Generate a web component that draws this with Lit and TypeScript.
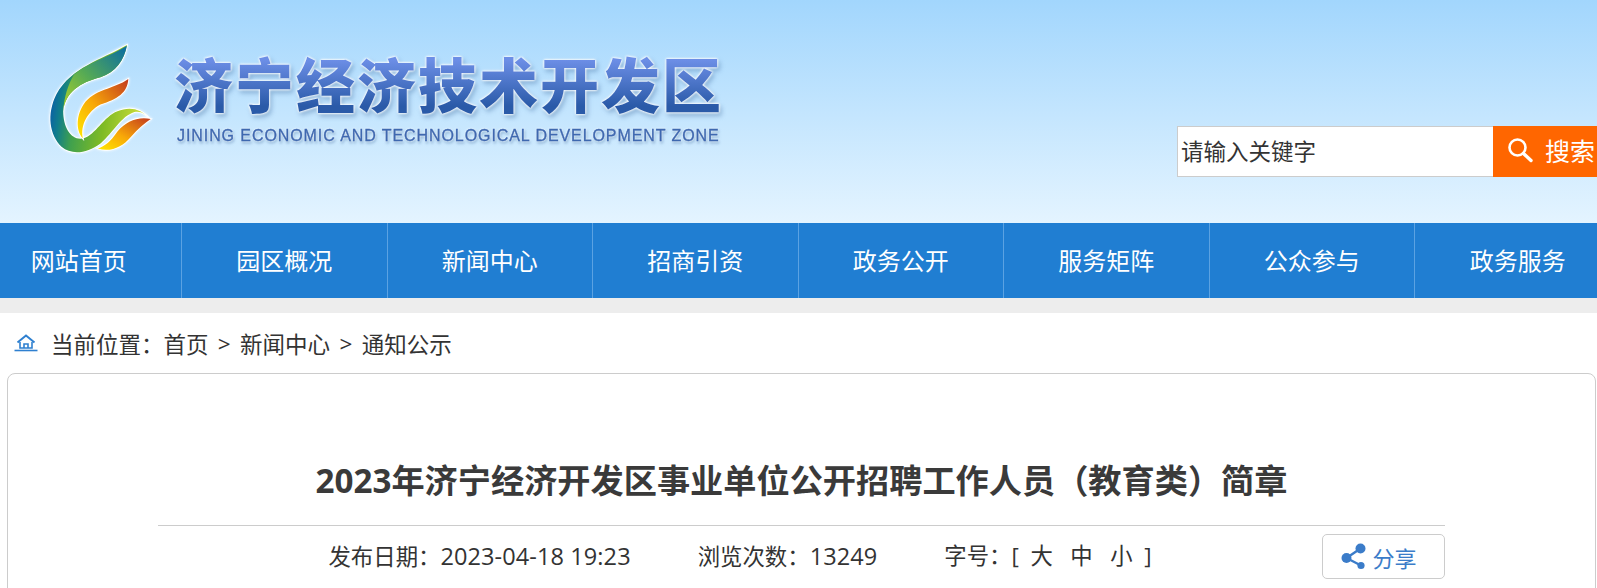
import { LitElement, html, css } from "lit";
import { customElement } from "lit/decorators.js";

const NAV = ["网站首页", "园区概况", "新闻中心", "招商引资", "政务公开", "服务矩阵", "公众参与", "政务服务"];

@customElement("app-root")
export class AppRoot extends LitElement {
  static styles = css`
    :host {
      display: block;
      height: 588px;
      overflow: hidden;
      background: #fff;
      color: #333;
      font-family: "Open Sans", "Noto Sans CJK SC", sans-serif;
    }
    .header {
      height: 223px;
      background: linear-gradient(#a2d6fd, #e4f4ff);
      display: flex;
      justify-content: center;
      overflow: hidden;
    }
    .header-inner {
      flex: 0 0 1645px;
      display: flex;
      align-items: flex-start;
      justify-content: space-between;
      box-sizing: border-box;
      padding: 40px 0 0 70px;
    }
    .logo {
      display: flex;
      gap: 19px;
    }
    .logo svg {
      display: block;
      width: 109px;
      height: 117px;
      filter: drop-shadow(0 0 1.5px #fff);
    }
    .brand {
      display: flex;
      flex-direction: column;
      padding-top: 10px;
    }
    .brand-name-wrap {
      filter: drop-shadow(0 0 1.2px #fff) drop-shadow(0 0 1.2px #fff) drop-shadow(2px 3px 2px rgba(50, 95, 150, 0.35));
    }
    .brand-name {
      font-family: "Noto Sans CJK SC", sans-serif;
      font-weight: 900;
      font-size: 59px;
      line-height: 66px;
      letter-spacing: 2px;
      white-space: nowrap;
      background: linear-gradient(#6c8ee6 15%, #2a5aa8 85%);
      -webkit-background-clip: text;
      background-clip: text;
      color: transparent;
    }
    .brand-en {
      font-family: "Liberation Sans", sans-serif;
      font-size: 16px;
      line-height: 20px;
      letter-spacing: 0.92px;
      white-space: nowrap;
      color: #3f68b0;
      margin: 10px 0 0 3px;
      -webkit-text-stroke: 0.3px #3f68b0;
      filter: drop-shadow(0 0 1px #fff) drop-shadow(1px 2px 1px rgba(50, 95, 150, 0.35));
    }
    .search {
      display: flex;
      margin-top: 86px;
      height: 51px;
    }
    .search input {
      box-sizing: border-box;
      width: 316px;
      height: 51px;
      border: 1px solid #ccc;
      border-right: 0;
      background: #fff;
      padding: 0 0 4px 3px;
      margin: 0;
      outline: none;
      font: 22.5px "Noto Sans CJK SC", sans-serif;
      color: #333;
    }
    .search input::placeholder {
      color: #333;
      opacity: 1;
    }
    .search-btn {
      width: 128px;
      background: #ff6600;
      color: #fff;
      display: flex;
      align-items: center;
      box-sizing: border-box;
      padding: 0 0 3px 14px;
      gap: 12px;
      font: 25px "Noto Sans CJK SC", sans-serif;
      white-space: nowrap;
    }
    .search-btn svg {
      width: 26px;
      height: 26px;
      flex: none;
    }
    .nav {
      height: 75px;
      background: #207ed2;
      display: flex;
      justify-content: center;
      overflow: hidden;
    }
    .nav-item {
      flex: 0 0 205.5px;
      box-sizing: border-box;
      border-right: 1px solid #5ba2e2;
      color: #fff;
      font-size: 24px;
      line-height: 75px;
      text-align: center;
    }
    .nav-item:last-child {
      border-right: 0;
    }
    .band {
      height: 15px;
      background: #ededed;
    }
    .crumbs {
      height: 60px;
      box-sizing: border-box;
      padding-left: 14px;
      display: flex;
      align-items: center;
      font-size: 22.5px;
      color: #333;
      white-space: pre;
    }
    .crumbs svg {
      width: 24px;
      height: 18px;
      margin-right: 13px;
      flex: none;
    }
    .sep {
      margin: 0 3.5px;
    }
    .card {
      margin: 0 1px 0 7px;
      height: 400px;
      box-sizing: border-box;
      border: 1px solid #ccc;
      border-radius: 8px;
      background: #fff;
      display: flex;
      flex-direction: column;
      align-items: center;
      padding-top: 82px;
    }
    .title {
      font-size: 33.2px;
      font-weight: 700;
      line-height: 50px;
      color: #3a3a3a;
      white-space: nowrap;
    }
    .article-head {
      width: 1287px;
      margin-top: 19px;
      border-top: 1px solid #ccc;
      padding-top: 8px;
      display: flex;
      align-items: flex-start;
    }
    .meta {
      flex: 1;
      display: flex;
      justify-content: center;
      gap: 67px;
      font-size: 22.4px;
      line-height: 44px;
      color: #333;
      white-space: pre;
    }
    .num {
      font-size: 23.5px;
      letter-spacing: 0.1px;
    }
    .share {
      flex: 0 0 123px;
      height: 45px;
      box-sizing: border-box;
      border: 1px solid #ccc;
      border-radius: 5px;
      display: flex;
      align-items: center;
      justify-content: center;
      gap: 6px;
      color: #3b7cc9;
      font-size: 22px;
      padding-right: 9px;
    }
    .share svg {
      width: 25px;
      height: 27px;
      flex: none;
    }
  `;

  render() {
    return html`
      <div class="header">
        <div class="header-inner">
          <div class="logo">
            <svg viewBox="140 60 320 345" aria-hidden="true">
              <defs>
                <linearGradient id="g1" gradientUnits="userSpaceOnUse" x1="150" y1="260" x2="445" y2="300">
                  <stop offset="0" stop-color="#0a5ea8" />
                  <stop offset="0.1" stop-color="#0f7c8c" />
                  <stop offset="0.25" stop-color="#3fa04e" />
                  <stop offset="0.55" stop-color="#7fbb24" />
                  <stop offset="1" stop-color="#dfe53e" />
                </linearGradient>
                <linearGradient id="g2" gradientUnits="userSpaceOnUse" x1="195" y1="260" x2="378" y2="90">
                  <stop offset="0" stop-color="#a8d02a" />
                  <stop offset="0.45" stop-color="#55aa55" />
                  <stop offset="1" stop-color="#0d6f9e" />
                </linearGradient>
                <linearGradient id="g3" x1="0" y1="1" x2="1" y2="0">
                  <stop offset="0" stop-color="#ffe800" />
                  <stop offset="0.45" stop-color="#f8a808" />
                  <stop offset="1" stop-color="#c23a1e" />
                </linearGradient>
              </defs>
              <path fill="url(#g1)" stroke="#fff" stroke-width="5" paint-order="stroke"
                d="M378,75 C300,120 215,140 170,220 C140,280 150,340 185,375 C215,400 260,395 300,365 C340,330 360,285 400,272 C420,268 435,280 445,292 C420,262 385,255 350,270 C310,285 285,340 250,350 C215,358 190,320 190,270 C195,215 240,185 300,170 C345,155 370,120 378,75Z" />
              <path fill="url(#g2)"
                d="M378,77 C320,112 262,128 222,162 C205,190 192,230 190,272 C195,215 240,185 300,170 C345,155 370,120 378,77Z" />
              <path fill="url(#g3)" stroke="#fff" stroke-width="5" paint-order="stroke"
                d="M382,175 C340,205 280,205 250,250 C225,290 230,330 248,350 C240,310 262,270 300,250 C350,235 380,215 382,175Z" />
              <path fill="url(#g3)" stroke="#fff" stroke-width="5" paint-order="stroke"
                d="M448,293 C410,285 375,300 350,330 C330,360 310,375 292,380 C330,392 365,375 390,345 C410,322 430,305 448,293Z" />
            </svg>
            <div class="brand">
              <div class="brand-name-wrap"><div class="brand-name">济宁经济技术开发区</div></div>
              <div class="brand-en">JINING ECONOMIC AND TECHNOLOGICAL DEVELOPMENT ZONE</div>
            </div>
          </div>
          <div class="search">
            <input placeholder="请输入关键字" />
            <div class="search-btn">
              <svg viewBox="0 0 26 26" fill="none" stroke="#fff" aria-hidden="true">
                <circle cx="10.5" cy="10.5" r="8" stroke-width="2.6" />
                <path d="M16.5 16.5L24 23.5" stroke-width="3.4" stroke-linecap="round" />
              </svg>
              <span>搜索</span>
            </div>
          </div>
        </div>
      </div>
      <div class="nav">
        ${NAV.map((n) => html`<div class="nav-item">${n}</div>`)}
      </div>
      <div class="band"></div>
      <div class="crumbs">
        <svg viewBox="0 0 24 18" fill="none" stroke="#2f80d0" aria-hidden="true">
          <path d="M3.5 8.5L12 1.5L20.5 8.5" stroke-width="2" />
          <path d="M6 8V14H18V8M10 14V10H14V14" stroke-width="1.6" />
          <path d="M0.5 16.5H23.5" stroke-width="1.6" />
        </svg>
        <span>当前位置：首页</span><span class="sep"> &gt; </span><span>新闻中心</span><span class="sep"> &gt; </span><span>通知公示</span>
      </div>
      <div class="card">
        <div class="title">2023年济宁经济开发区事业单位公开招聘工作人员（教育类）简章</div>
        <div class="article-head">
          <div class="meta">
            <span>发布日期：<span class="num">2023-04-18 19:23</span></span>
            <span>浏览次数：<span class="num">13249</span></span>
            <span>字号：[  大   中   小  ]</span>
          </div>
          <div class="share">
            <svg viewBox="0 0 25 27" fill="#3b7cc9" aria-hidden="true">
              <circle cx="19.5" cy="5.5" r="5" />
              <circle cx="5.5" cy="15" r="5" />
              <circle cx="20" cy="22.5" r="3.6" />
              <path d="M5.5 15L19.5 5.5M5.5 15L20 22.5" stroke="#3b7cc9" stroke-width="2.4" />
            </svg>
            <span>分享</span>
          </div>
        </div>
      </div>
    `;
  }
}
